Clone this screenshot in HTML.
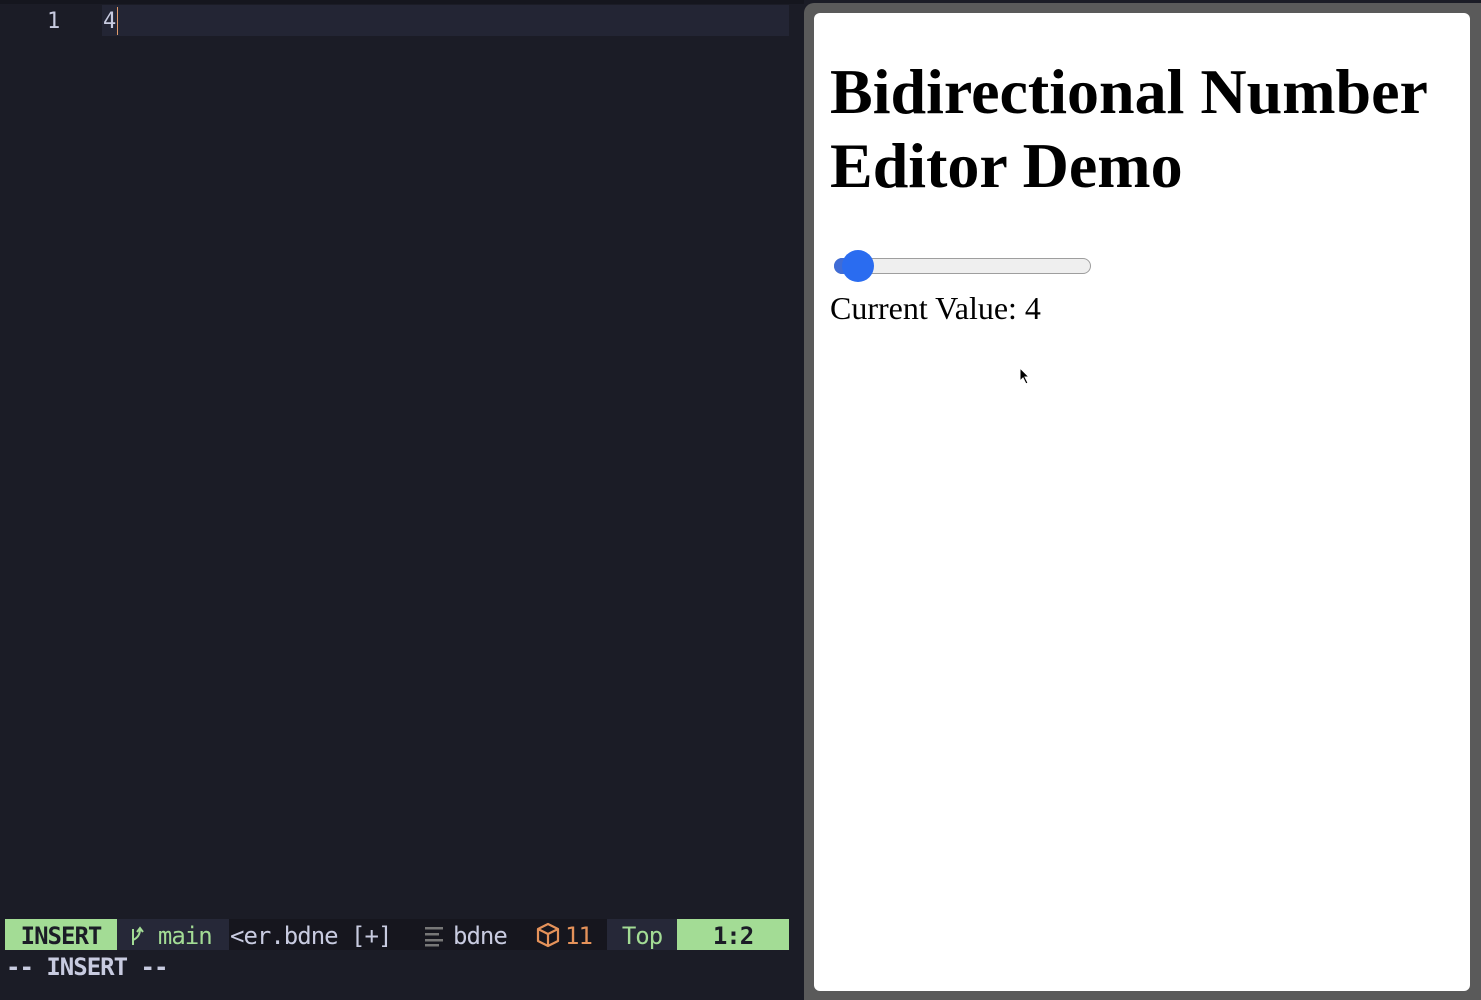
<!DOCTYPE html>
<html style="width:1481px;height:1000px;overflow:hidden"><head><meta charset="utf-8"><style>
*{margin:0;padding:0;box-sizing:border-box}
body{width:1481px;height:1000px;background:#1b1c26;position:relative;overflow:hidden;font-family:"DejaVu Sans Mono","Liberation Mono",monospace}
.abs{position:absolute}
.mono{font-family:"DejaVu Sans Mono","Liberation Mono",monospace;font-size:24px;letter-spacing:-1px;line-height:31px;white-space:pre}
</style></head><body>
<div class="abs" style="left:0;top:0;width:804px;height:4px;background:#15161e"></div>
<div class="abs" style="left:102px;top:5px;width:687px;height:31px;background:#232534"></div>
<div class="abs mono" style="left:47px;top:6px;color:#c8cbe0;font-size:22px">1</div>
<div class="abs mono" style="left:103px;top:6px;color:#c8cbe0;font-size:22px">4</div>
<div class="abs" style="left:117px;top:7px;width:1px;height:28px;background:#e09a6a"></div>

<div class="abs" style="left:5px;top:919px;width:784px;height:31px;background:#16161e"></div>
<div class="abs mono" style="left:5px;top:919px;width:112px;height:31px;background:#a3dc95;color:#1b1c26;font-weight:bold;text-align:center;padding-top:2px">INSERT</div>
<div class="abs mono" style="left:117px;top:919px;width:112px;height:31px;background:#262838;color:#a3dc95;padding-top:2px"> <svg width="14" height="22" viewBox="0 0 14 22" style="vertical-align:-3px"><path d="M3 4 L3 20 M3 15 Q10 12 10 4 M7 7 L10 3 L13 7" stroke="#a3dc95" stroke-width="2" fill="none"/></svg> main</div>
<div class="abs mono" style="left:230px;top:921px;color:#c8cbe0">&lt;er.bdne [+]</div>
<svg class="abs" style="left:424px;top:925px" width="22" height="22"><g fill="#777"><rect x="1" y="2" width="18" height="2.5"/><rect x="1" y="8" width="14" height="2.5"/><rect x="1" y="14" width="18" height="2.5"/><rect x="1" y="19" width="14" height="2.5"/></g></svg>
<div class="abs mono" style="left:453px;top:921px;color:#c8cbe0">bdne</div>
<svg class="abs" style="left:536px;top:922px" width="24" height="26" viewBox="0 0 24 26"><path d="M12 2 L22 7 L22 19 L12 24 L2 19 L2 7 Z M2 7 L12 12 L22 7 M12 12 L12 24" stroke="#e5925a" stroke-width="2.2" fill="none" stroke-linejoin="round"/></svg>
<div class="abs mono" style="left:565px;top:921px;color:#e5925a">11</div>
<div class="abs mono" style="left:607px;top:919px;width:70px;height:31px;background:#262838;color:#a3dc95;text-align:center;padding-top:2px">Top</div>
<div class="abs mono" style="left:677px;top:919px;width:112px;height:31px;background:#a3dc95;color:#1b1c26;font-weight:bold;text-align:center;padding-top:2px">1:2</div>
<div class="abs mono" style="left:6px;top:952px;color:#c8cbe0;font-weight:bold">-- INSERT --</div>

<div class="abs" style="left:804px;top:3px;width:690px;height:1010px;background:#5a5a5a;border-radius:10px"></div>
<div class="abs" style="left:814px;top:13px;width:656px;height:978px;background:#fff;border-radius:6px;font-family:'Liberation Serif',serif;color:#000">
  <div style="position:absolute;left:16px;top:42px;font-size:64px;font-weight:bold;line-height:74px;width:640px">Bidirectional Number Editor Demo</div>
  <div style="position:absolute;left:20px;top:245px;width:257px;height:16px;background:#efefef;border:1.5px solid #9e9e9e;border-radius:8px"></div>
  <div style="position:absolute;left:20px;top:245px;width:30px;height:16px;background:#3f6cd6;border-radius:8px"></div>
  <div style="position:absolute;left:28px;top:237px;width:32px;height:32px;background:#2a6cf0;border-radius:50%"></div>
  <div style="position:absolute;left:16px;top:277px;font-size:32px;line-height:36px">Current Value: 4</div>
</div>
<svg class="abs" style="left:1019px;top:367px" width="12" height="18"><path d="M1 1 L1 14 L4 11 L7 17 L9 16 L6 10 L10 10 Z" fill="#000" stroke="#fff" stroke-width="1"/></svg>
</body></html>
